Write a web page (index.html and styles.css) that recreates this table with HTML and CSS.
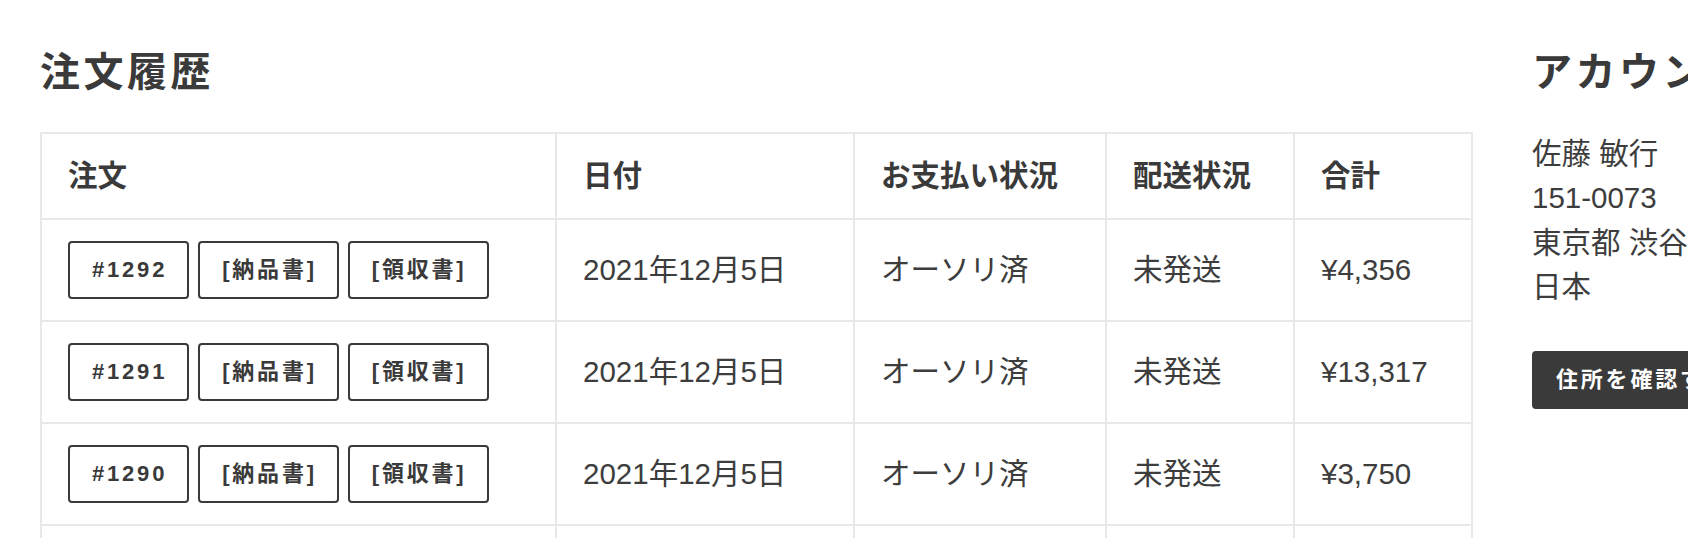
FILE: index.html
```html
<!DOCTYPE html>
<html lang="ja">
<head>
<meta charset="utf-8">
<title>アカウント</title>
<link rel="stylesheet" href="styles.css">
</head>
<body>
<div class="page">
  <section class="orders">
    <h2 class="title">注文履歴</h2>
    <table class="order-table">
      <colgroup>
        <col class="c-order">
        <col class="c-date">
        <col class="c-pay">
        <col class="c-ship">
        <col class="c-total">
      </colgroup>
      <thead>
        <tr><th>注文</th><th>日付</th><th>お支払い状況</th><th>配送状況</th><th>合計</th></tr>
      </thead>
      <tbody>
        <tr>
          <td><div class="actions"><a class="btn" href="#">#1292</a><a class="btn" href="#">[納品書]</a><a class="btn" href="#">[領収書]</a></div></td>
          <td>2021年12月5日</td><td>オーソリ済</td><td>未発送</td><td>¥4,356</td>
        </tr>
        <tr>
          <td><div class="actions"><a class="btn" href="#">#1291</a><a class="btn" href="#">[納品書]</a><a class="btn" href="#">[領収書]</a></div></td>
          <td>2021年12月5日</td><td>オーソリ済</td><td>未発送</td><td>¥13,317</td>
        </tr>
        <tr>
          <td><div class="actions"><a class="btn" href="#">#1290</a><a class="btn" href="#">[納品書]</a><a class="btn" href="#">[領収書]</a></div></td>
          <td>2021年12月5日</td><td>オーソリ済</td><td>未発送</td><td>¥3,750</td>
        </tr>
        <tr>
          <td><div class="actions"><a class="btn" href="#">#1289</a><a class="btn" href="#">[納品書]</a><a class="btn" href="#">[領収書]</a></div></td>
          <td>2021年12月4日</td><td>オーソリ済</td><td>未発送</td><td>¥2,980</td>
        </tr>
      </tbody>
    </table>
  </section>
  <aside class="account">
    <h2 class="title">アカウント情報</h2>
    <p class="address">佐藤 敏行<br>151-0073<br>東京都 渋谷区 笹塚<br>日本</p>
    <a class="btn btn-solid" href="#">住所を確認する (1)</a>
  </aside>
</div>
</body>
</html>
```

FILE: styles.css
```css
html, body {
  margin: 0;
  padding: 0;
  overflow: hidden;
  background: #ffffff;
}

body {
  font-family: "Liberation Sans", "Noto Sans CJK JP", sans-serif;
  font-size: 29.5px;
  line-height: 1.5;
  color: #3d3d3d;
}

.page {
  display: grid;
  grid-template-columns: 1431px 460px;
  column-gap: 61px;
  padding: 48px 0 0 40px;
  width: 2100px;
}

.title {
  margin: 0 0 36px;
  font-size: 40px;
  line-height: 1.2;
  font-weight: 700;
  letter-spacing: 3.5px;
  color: #3a3a3a;
  white-space: nowrap;
}

.order-table {
  width: 1431px;
  border-collapse: collapse;
  table-layout: fixed;
}

.c-order { width: 515px; }
.c-date { width: 298px; }
.c-pay { width: 252px; }
.c-ship { width: 188px; }
.c-total { width: 178px; }

.order-table th,
.order-table td {
  border: 2px solid #e8e8e8;
  padding: 21px 26px;
  text-align: left;
  vertical-align: middle;
  white-space: nowrap;
}

.order-table th {
  padding-top: 20px;
  padding-bottom: 20px;
  font-weight: 700;
  color: #3a3a3a;
}

.actions {
  display: flex;
  gap: 9px;
}

.btn {
  display: inline-block;
  font-size: 22px;
  line-height: 30px;
  font-weight: 700;
  letter-spacing: 2.8px;
  padding: 12px 20px 12px 22px;
  border: 2px solid #3a3a3a;
  border-radius: 4px;
  color: #3a3a3a;
  text-decoration: none;
  white-space: nowrap;
}

.account {
  white-space: nowrap;
}

.address {
  margin: 0 0 42px;
}

.btn-solid {
  background: #3a3a3a;
  color: #ffffff;
}
```
